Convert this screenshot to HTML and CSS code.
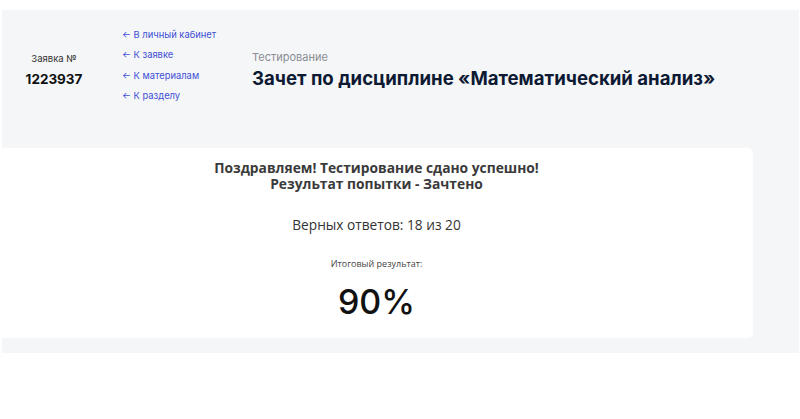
FILE: index.html
```html
<!DOCTYPE html>
<html lang="ru">
<head>
<meta charset="utf-8">
<link rel="stylesheet" href="styles.css">
</head>
<body>
<div class="page">
  <header class="head">
    <div class="order">
      <div class="order-label">Заявка №</div>
      <div class="order-num">1223937</div>
    </div>
    <nav class="links">
      <a href="#">← В личный кабинет</a>
      <a href="#">← К заявке</a>
      <a href="#">← К материалам</a>
      <a href="#">← К разделу</a>
    </nav>
    <div class="titles">
      <div class="kind">Тестирование</div>
      <h1 class="title">Зачет по дисциплине «Математический анализ»</h1>
    </div>
  </header>
  <section class="card">
    <div class="congrats">Поздравляем! Тестирование сдано успешно!
Результат попытки - Зачтено</div>
    <div class="answers">Верных ответов: 18 из 20</div>
    <div class="total-label">Итоговый результат:</div>
    <div class="total">90%</div>
  </section>
</div>
</body>
</html>
```
FILE: styles.css
```css
html, body { margin: 0; padding: 0; background: #fff; }
body { font-family: Inter, "Noto Sans", sans-serif; }
.page {
  margin: 10px 1px 0 2px;
  background: #f5f6f8;
  height: 343px;
}
.head {
  display: flex;
  align-items: flex-start;
  height: 138px;
}
.order {
  width: 100px;
  padding-top: 43px;
  text-align: center;
  margin-left: 2px;
}
.order-label { font-size: 9.5px; color: #333; line-height: 12px; }
.order-num { font-size: 13.5px; font-weight: 700; color: #111; line-height: 18px; margin-top: 5px; }
.links {
  display: flex;
  flex-direction: column;
  gap: 7.3px;
  padding-top: 18px;
  margin-left: 18px;
  width: 130px;
}
.links a {
  font-size: 9.4px;
  line-height: 13px;
  color: #3d50d6;
  text-decoration: none;
}
.titles { padding-top: 40px; }
.kind { font-size: 11px; color: #8a8d93; line-height: 15px; }
.title { margin: 0; font-size: 18.6px; font-weight: 700; color: #0e1a33; line-height: 26px; }
.card {
  background: #fff;
  width: 753px;
  margin-left: -2px;
  height: 190px;
  border-radius: 0 5px 5px 0;
  text-align: center;
  color: #333;
  font-family: "Open Sans", Inter, sans-serif;
  box-sizing: border-box;
  padding-top: 12px;
}
.congrats { font-size: 13.8px; font-weight: 700; line-height: 16px; color: #3a3a3a; white-space: pre-line; }
.answers { font-size: 13.7px; margin-top: 23px; line-height: 20px; }
.total-label { font-size: 9px; margin-top: 22px; line-height: 14px; color: #444; }
.total { font-size: 34px; font-weight: 500; color: #111; margin-top: 8px; line-height: 46px; font-family: Inter, sans-serif; }
```
